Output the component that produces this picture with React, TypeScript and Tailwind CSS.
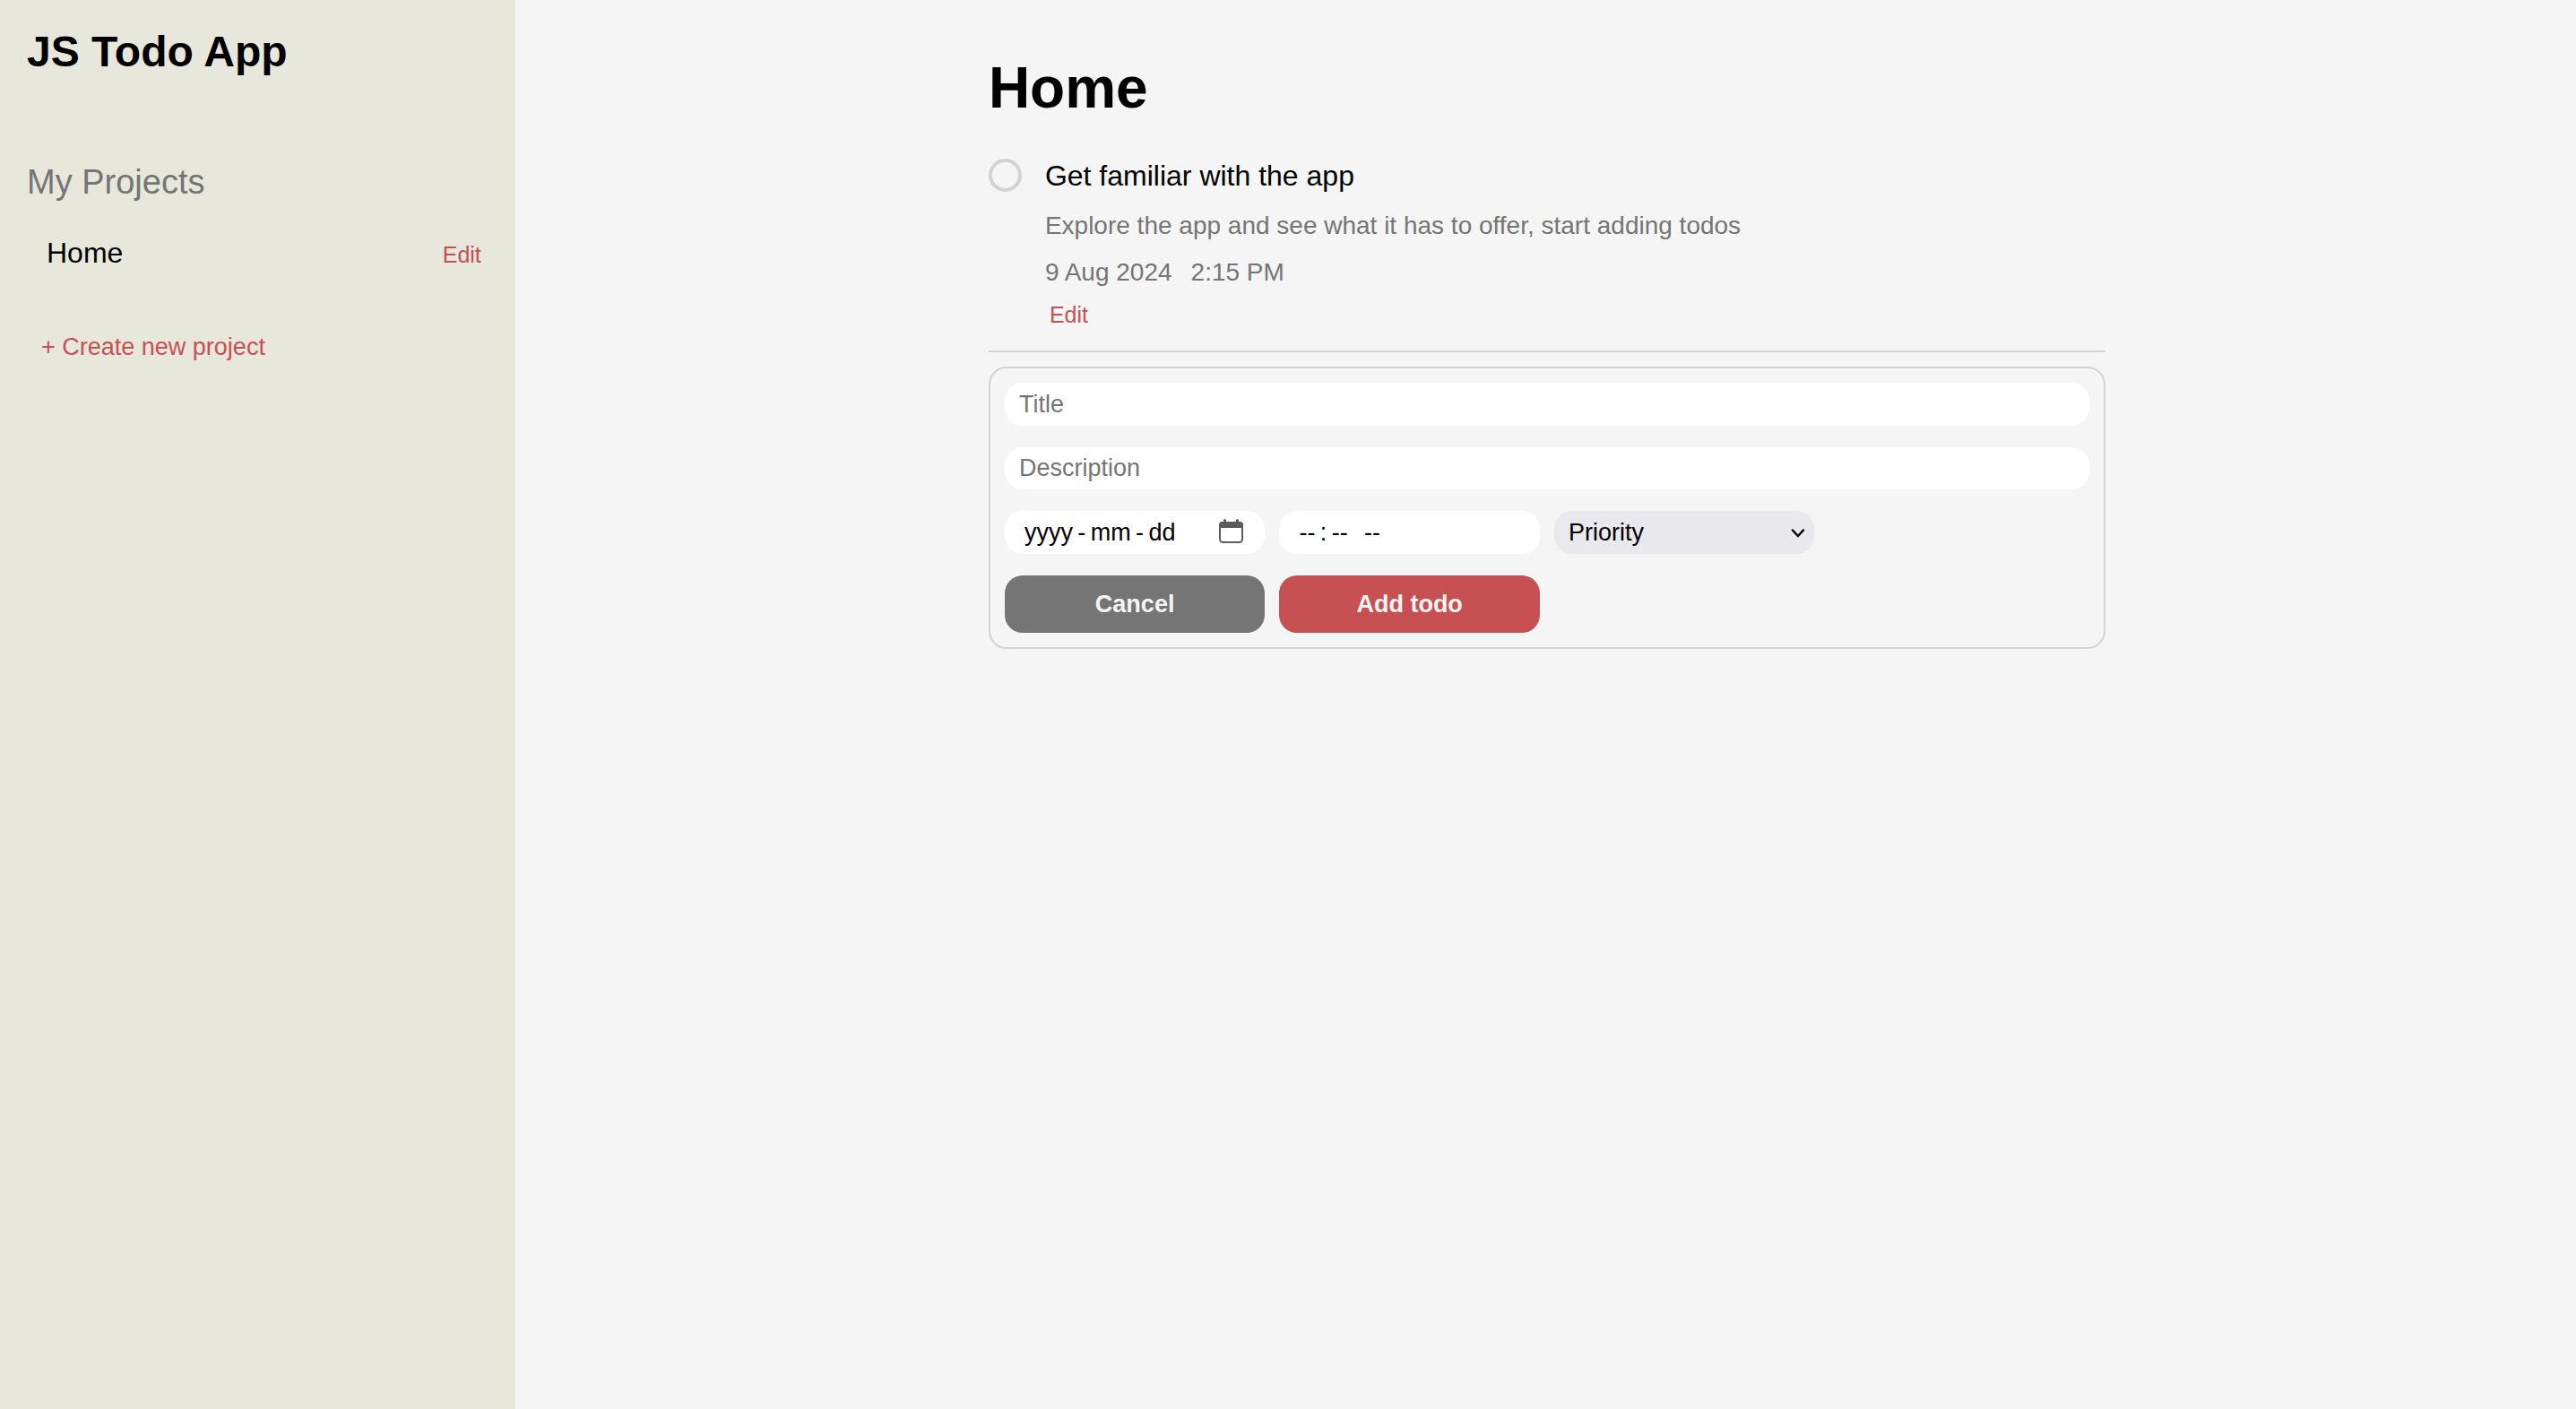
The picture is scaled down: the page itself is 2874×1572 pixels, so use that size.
import { useState } from "react";

const THIN = "\u2009";

function CalendarIcon() {
  return (
    <svg viewBox="0 0 27 27" className="h-[27px] w-[27px]" aria-hidden="true">
      <rect x="1" y="4" width="25" height="22" rx="3.5" fill="none" stroke="#5b5b5b" strokeWidth="2" />
      <path d="M0 10V6.500Q0 3 3.500 3H23.500Q27 3 27 6.500V10Z" fill="#5b5b5b" />
      <path d="M6.500 1.500V4M20.500 1.500V4" stroke="#5b5b5b" strokeWidth="3" strokeLinecap="round" />
    </svg>
  );
}

function Sidebar() {
  return (
    <aside className="w-1/5 shrink-0 bg-[#e7e7db] pt-[30px] pr-[34px] pl-[30px]">
      <h1 className="text-[48px] leading-[55px] font-bold">JS Todo App</h1>
      <h2 className="mt-24 text-[38px] leading-[44px] text-[#757575]">My Projects</h2>
      <ul className="mt-[37px]">
        <li className="flex items-center justify-between pl-[22px] leading-[37px]">
          <button type="button" className="text-[32px]">Home</button>
          <button type="button" className="px-1 pt-1 text-[25px] text-[#c75053]">Edit</button>
        </li>
      </ul>
      <button type="button" className="mt-[69px] ml-4 block text-[27px] leading-[31px] text-[#c75053]">
        + Create new project
      </button>
    </aside>
  );
}

function TodoItem() {
  const [done, setDone] = useState(false);
  return (
    <li className="flex gap-[26px] border-b-2 border-[#d3d3d3] pb-[25px]">
      <input
        id="todo-1"
        type="checkbox"
        checked={done}
        onChange={() => setDone(!done)}
        className="h-[37px] w-[37px] shrink-0 appearance-none rounded-full border-4 border-[#d3d3d3] checked:bg-[#d3d3d3]"
      />
      <div className="flex flex-col items-start text-[28px] leading-[32px] text-[#757575]">
        <label htmlFor="todo-1" className="text-[32px] leading-[38px] text-black">
          Get familiar with the app
        </label>
        <p className="mt-[21px]">Explore the app and see what it has to offer, start adding todos</p>
        <p className="mt-5 flex gap-[21px]">
          <span>9 Aug 2024</span>
          <span>2:15 PM</span>
        </p>
        <button type="button" className="mt-[17px] px-[5px] text-[25px] leading-[29px] text-[#c75053]">
          Edit
        </button>
      </div>
    </li>
  );
}

const field = "w-full rounded-[20px] text-[27px] leading-[31px] outline-none";

function TodoForm() {
  return (
    <form
      onSubmit={(e) => e.preventDefault()}
      className="mt-4 grid grid-cols-4 gap-x-4 gap-y-6 rounded-[20px] border-2 border-[#d3d3d3] p-4"
    >
      <input aria-label="Title" placeholder="Title" className={`${field} col-span-4 h-12 bg-white px-4 placeholder:text-[#757575]`} />
      <input aria-label="Description" placeholder="Description" className={`${field} col-span-4 h-[47px] bg-white px-4 placeholder:text-[#757575]`} />
      <div className="flex h-12 items-center rounded-[20px] bg-white pr-6">
        <input
          aria-label="Date"
          placeholder={`yyyy${THIN}-${THIN}mm${THIN}-${THIN}dd`}
          className={`${field} h-12 min-w-0 flex-1 pl-[22px] placeholder:text-black`}
        />
        <button type="button" aria-label="Open calendar" className="pb-1">
          <CalendarIcon />
        </button>
      </div>
      <input
        aria-label="Time"
        placeholder={`--${THIN}:${THIN}--${THIN} ${THIN}--`}
        className={`${field} h-12 bg-white px-[22px] placeholder:text-black`}
      />
      <div className="relative">
        <select aria-label="Priority" defaultValue="" className={`${field} h-12 appearance-none bg-[#e9e9ed] px-4 text-black`}>
          <option value="">Priority</option>
          <option value="low">Low</option>
          <option value="medium">Medium</option>
          <option value="high">High</option>
        </select>
        <svg viewBox="0 0 16 10" className="pointer-events-none absolute top-5 right-[10px] h-[10px] w-4" aria-hidden="true">
          <path d="M2 1.500L8 8L14 1.500" fill="none" stroke="black" strokeWidth="2.500" strokeLinecap="round" />
        </svg>
      </div>
      <button type="button" className="col-start-1 h-16 rounded-[20px] bg-[#757575] text-[27px] font-bold text-[#f5f5f5]">
        Cancel
      </button>
      <button type="submit" className="h-16 rounded-[20px] bg-[#c75053] text-[27px] font-bold text-[#f5f5f5]">
        Add todo
      </button>
    </form>
  );
}

export default function App() {
  return (
    <div className="flex min-h-screen bg-[#f5f5f5] font-['Liberation_Sans',Arial,sans-serif] text-black">
      <Sidebar />
      <main className="flex-1 pt-[61px] pl-[3px]">
        <div className="mx-auto max-w-[1246px]">
          <h2 className="text-[64px] leading-[74px] font-bold">Home</h2>
          <ul className="mt-[42px]">
            <TodoItem />
          </ul>
          <TodoForm />
        </div>
      </main>
    </div>
  );
}
